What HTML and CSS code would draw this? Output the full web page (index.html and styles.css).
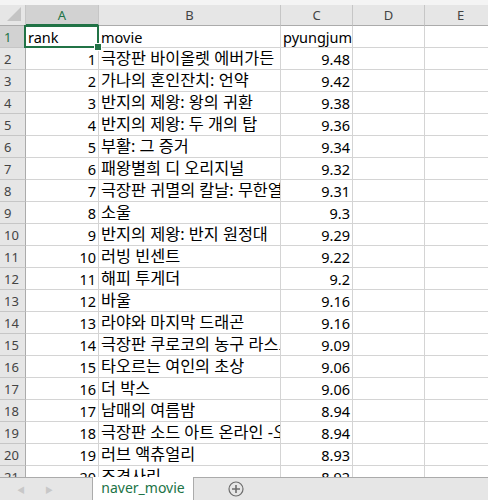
FILE: index.html
```html
<!DOCTYPE html>
<html lang="ko">
<head>
<meta charset="utf-8">
<link rel="stylesheet" href="styles.css">
</head>
<body>
<div class="app">
  <div class="sheet">
    <div class="grid">
      <div class="corner"><span class="tri"></span></div>
      <div class="colh sel">A</div>
      <div class="colh">B</div>
      <div class="colh">C</div>
      <div class="colh">D</div>
      <div class="colh">E</div>

      <div class="rowh sel">1</div><div class="c active">rank</div><div class="c">movie</div><div class="c">pyungjum</div><div class="c"></div><div class="c"></div>
      <div class="rowh">2</div><div class="c n">1</div><div class="c ko">극장판 바이올렛 에버가든</div><div class="c n">9.48</div><div class="c"></div><div class="c"></div>
      <div class="rowh">3</div><div class="c n">2</div><div class="c ko">가나의 혼인잔치: 언약</div><div class="c n">9.42</div><div class="c"></div><div class="c"></div>
      <div class="rowh">4</div><div class="c n">3</div><div class="c ko">반지의 제왕: 왕의 귀환</div><div class="c n">9.38</div><div class="c"></div><div class="c"></div>
      <div class="rowh">5</div><div class="c n">4</div><div class="c ko">반지의 제왕: 두 개의 탑</div><div class="c n">9.36</div><div class="c"></div><div class="c"></div>
      <div class="rowh">6</div><div class="c n">5</div><div class="c ko">부활: 그 증거</div><div class="c n">9.34</div><div class="c"></div><div class="c"></div>
      <div class="rowh">7</div><div class="c n">6</div><div class="c ko">패왕별희 디 오리지널</div><div class="c n">9.32</div><div class="c"></div><div class="c"></div>
      <div class="rowh">8</div><div class="c n">7</div><div class="c ko">극장판 귀멸의 칼날: 무한열차편</div><div class="c n">9.31</div><div class="c"></div><div class="c"></div>
      <div class="rowh">9</div><div class="c n">8</div><div class="c ko">소울</div><div class="c n">9.3</div><div class="c"></div><div class="c"></div>
      <div class="rowh">10</div><div class="c n">9</div><div class="c ko">반지의 제왕: 반지 원정대</div><div class="c n">9.29</div><div class="c"></div><div class="c"></div>
      <div class="rowh">11</div><div class="c n">10</div><div class="c ko">러빙 빈센트</div><div class="c n">9.22</div><div class="c"></div><div class="c"></div>
      <div class="rowh">12</div><div class="c n">11</div><div class="c ko">해피 투게더</div><div class="c n">9.2</div><div class="c"></div><div class="c"></div>
      <div class="rowh">13</div><div class="c n">12</div><div class="c ko">바울</div><div class="c n">9.16</div><div class="c"></div><div class="c"></div>
      <div class="rowh">14</div><div class="c n">13</div><div class="c ko">라야와 마지막 드래곤</div><div class="c n">9.16</div><div class="c"></div><div class="c"></div>
      <div class="rowh">15</div><div class="c n">14</div><div class="c ko">극장판 쿠로코의 농구 라스트 게임</div><div class="c n">9.09</div><div class="c"></div><div class="c"></div>
      <div class="rowh">16</div><div class="c n">15</div><div class="c ko">타오르는 여인의 초상</div><div class="c n">9.06</div><div class="c"></div><div class="c"></div>
      <div class="rowh">17</div><div class="c n">16</div><div class="c ko">더 박스</div><div class="c n">9.06</div><div class="c"></div><div class="c"></div>
      <div class="rowh">18</div><div class="c n">17</div><div class="c ko">남매의 여름밤</div><div class="c n">8.94</div><div class="c"></div><div class="c"></div>
      <div class="rowh">19</div><div class="c n">18</div><div class="c ko">극장판 소드 아트 온라인 -오디널 스케일-</div><div class="c n">8.94</div><div class="c"></div><div class="c"></div>
      <div class="rowh">20</div><div class="c n">19</div><div class="c ko">러브 액츄얼리</div><div class="c n">8.93</div><div class="c"></div><div class="c"></div>
      <div class="rowh">21</div><div class="c n">20</div><div class="c ko">조경사리</div><div class="c n">8.92</div><div class="c"></div><div class="c"></div>
    </div>
  </div>
  <div class="tabbar">
    <div class="nav">
      <span class="arrow">&#9664;</span>
      <span class="arrow">&#9654;</span>
    </div>
    <div class="tab">naver_movie</div>
    <div class="add">
      <svg width="16" height="16" viewBox="0 0 16 16"><circle cx="8" cy="8" r="7" fill="none" stroke="#6d6d6d" stroke-width="1.2"/><path d="M8 4v8M4 8h8" stroke="#6d6d6d" stroke-width="1.6"/></svg>
    </div>
    <div class="rest"></div>
  </div>
</div>
</body>
</html>
```

FILE: styles.css
```css
* { box-sizing: border-box; }
html, body { margin: 0; padding: 0; }
body {
  width: 488px;
  height: 500px;
  overflow: hidden;
  background: #fff;
  font-family: "Noto Sans", "Noto Sans CJK KR", sans-serif;
}
.app {
  display: flex;
  flex-direction: column;
  height: 500px;
}
.sheet {
  height: 477px;
  overflow: hidden;
  background: #fff;
  padding-top: 5px;
  background-image: linear-gradient(#f4f4f4, #f4f4f4);
  background-size: 100% 5px;
  background-repeat: no-repeat;
}
.grid {
  display: grid;
  grid-template-columns: 26px 73px 182px 72px 72px 72px;
  grid-template-rows: 21px;
  grid-auto-rows: 22px;
}
.corner {
  background: #e6e6e6;
  border-right: 1px solid #c6c6c6;
  border-bottom: 1px solid #ababab;
  position: relative;
}
.tri {
  position: absolute;
  right: 4px;
  bottom: 4px;
  width: 0;
  height: 0;
  border-left: 14px solid transparent;
  border-bottom: 14px solid #c4c4c4;
}
.colh {
  background: #e6e6e6;
  border-right: 1px solid #c6c6c6;
  border-bottom: 1px solid #ababab;
  color: #444;
  font-size: 13px;
  text-align: center;
  line-height: 20px;
}
.colh.sel {
  background: #d2d2d2;
  color: #217346;
  border-bottom: 2px solid #217346;
}
.rowh {
  background: #e6e6e6;
  border-right: 1px solid #ababab;
  border-bottom: 1px solid #c6c6c6;
  color: #444;
  font-size: 13px;
  line-height: 23px;
  padding-left: 4px;
}
.rowh.sel {
  background: #d2d2d2;
  color: #217346;
}
.c {
  border-right: 1px solid #d4d4d4;
  border-bottom: 1px solid #d4d4d4;
  font-size: 14.5px;
  line-height: 22px;
  padding: 0 2px;
  white-space: nowrap;
  overflow: hidden;
  color: #000;
}
.c.ko {
  font-size: 16.3px;
  line-height: 21px;
}
.c.n { text-align: right; }
.c.active {
  position: relative;
  overflow: visible;
}
.c.active::after {
  content: "";
  position: absolute;
  left: -2px;
  top: -1px;
  right: -1px;
  bottom: -1px;
  border: 2px solid #217346;
}
.c.active::before {
  content: "";
  position: absolute;
  right: -4px;
  bottom: -4px;
  width: 6px;
  height: 6px;
  background: #217346;
  border: 1px solid #fff;
  z-index: 2;
}
.tabbar {
  height: 23px;
  display: flex;
  background: #e6e6e6;
}
.nav {
  width: 93px;
  border-top: 1px solid #ababab;
  border-right: 1px solid #ababab;
  display: flex;
  align-items: center;
  gap: 20px;
  padding-left: 17px;
  color: #c8c8c8;
  font-size: 8px;
}
.tab {
  width: 100px;
  background: #fff;
  color: #217346;
  font-size: 14px;
  text-align: center;
  line-height: 22px;
}
.add {
  width: 84px;
  border-top: 1px solid #ababab;
  border-left: 1px solid #ababab;
  display: flex;
  justify-content: center;
  align-items: center;
}
.rest {
  flex: 1;
  border-top: 1px solid #ababab;
}
```
